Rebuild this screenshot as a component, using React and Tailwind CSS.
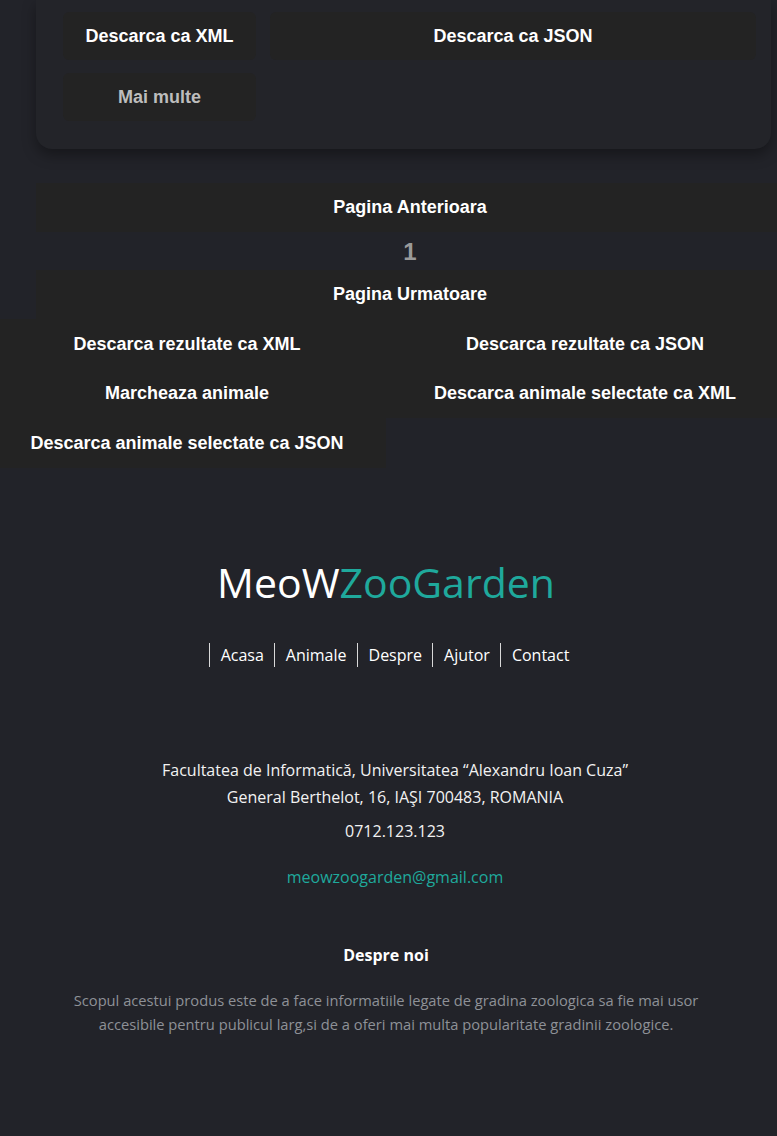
import React from "react";

// Butoanele din cardul de sus
const CardButton = ({ children, muted }) => (
  <button
    className={`h-[48px] w-full rounded-md bg-[#232323] text-[18px] font-bold ${muted ? "text-[#bdbdbd]" : "text-white"}`}
  >
    {children}
  </button>
);

const navLinks = ["Acasa", "Animale", "Despre", "Ajutor", "Contact"];

export default function App() {
  return (
    <div
      className="min-h-[1136px] w-[777px] overflow-hidden bg-[#222329]"
      style={{ fontFamily: '"Liberation Sans", Arial, sans-serif' }}
    >
      {/* ── Card descarcare ── */}
      <div className="ml-[36px] w-[735px] rounded-b-2xl bg-[#232429] pt-[12px] pb-[28px] pl-[27px] pr-[15px] shadow-[0_6px_14px_rgba(0,0,0,0.35)]">
        <div className="grid grid-cols-[193px_1fr] gap-x-[14px] gap-y-[13px]">
          <CardButton>Descarca ca XML</CardButton>
          <CardButton>Descarca ca JSON</CardButton>
          <CardButton muted>Mai multe</CardButton>
        </div>
      </div>

      {/* ── Paginare ── */}
      <div className="mt-[34px] ml-[36px] w-[748px]">
        <button className="h-[49px] w-full bg-[#232323] text-[18px] font-bold text-white">Pagina Anterioara</button>
        <div className="flex h-[38px] items-center justify-center pt-[2px] text-[24px] font-bold text-[#9a9a9a]">1</div>
        <button className="h-[49px] w-full bg-[#232323] text-[18px] font-bold text-white">Pagina Urmatoare</button>
      </div>

      {/* ── Actiuni rezultate ── */}
      <div className="grid w-[784px] grid-cols-[386px_398px] text-[18px] font-bold text-white">
        <button className="h-[50px] bg-[#232323] pr-[12px]">Descarca rezultate ca XML</button>
        <button className="h-[50px] bg-[#232323]">Descarca rezultate ca JSON</button>
        <button className="h-[49px] bg-[#232323] pr-[12px]">Marcheaza animale</button>
        <button className="h-[49px] bg-[#232323]">Descarca animale selectate ca XML</button>
        <button className="h-[50px] bg-[#232323] pr-[12px]">Descarca animale selectate ca JSON</button>
      </div>

      {/* ── Footer ── */}
      <footer
        className="flex w-[772px] flex-col items-center pt-[85px] pb-[80px]"
        style={{ fontFamily: '"Open Sans", sans-serif' }}
      >
        <h1 className="text-[41px] leading-[58px] text-white">
          MeoW<span className="text-[#1fa99c]">ZooGarden</span>
        </h1>

        <ul className="mt-[32px] flex pl-[16px] text-[16px] leading-[24px] text-white">
          {navLinks.map((link) => (
            <li key={link} className="border-l border-[#d9d9d9] pl-[11px] pr-[10px]">
              {link}
            </li>
          ))}
        </ul>

        <div className="mt-[90px] flex flex-col items-center pl-[18px] text-[16px] text-[#f2f2f2]">
          <p className="text-center leading-[27px]">
            Facultatea de Informatică, Universitatea “Alexandru Ioan Cuza”
            <br />
            General Berthelot, 16, IAŞI 700483, ROMANIA
          </p>
          <p className="mt-[7px] leading-[27px]">0712.123.123</p>
          <p className="mt-[19px] leading-[27px] text-[#1fa99c]">meowzoogarden@gmail.com</p>
        </div>

        <h3 className="mt-[52px] text-[16px] font-bold leading-[24px] text-white">Despre noi</h3>
        <p className="mt-[21px] w-[680px] text-center text-[14.7px] leading-[24px] text-[#8e9197]">
          Scopul acestui produs este de a face informatiile legate de gradina zoologica sa fie mai usor
          accesibile pentru publicul larg,si de a oferi mai multa popularitate gradinii zoologice.
        </p>
      </footer>
    </div>
  );
}
